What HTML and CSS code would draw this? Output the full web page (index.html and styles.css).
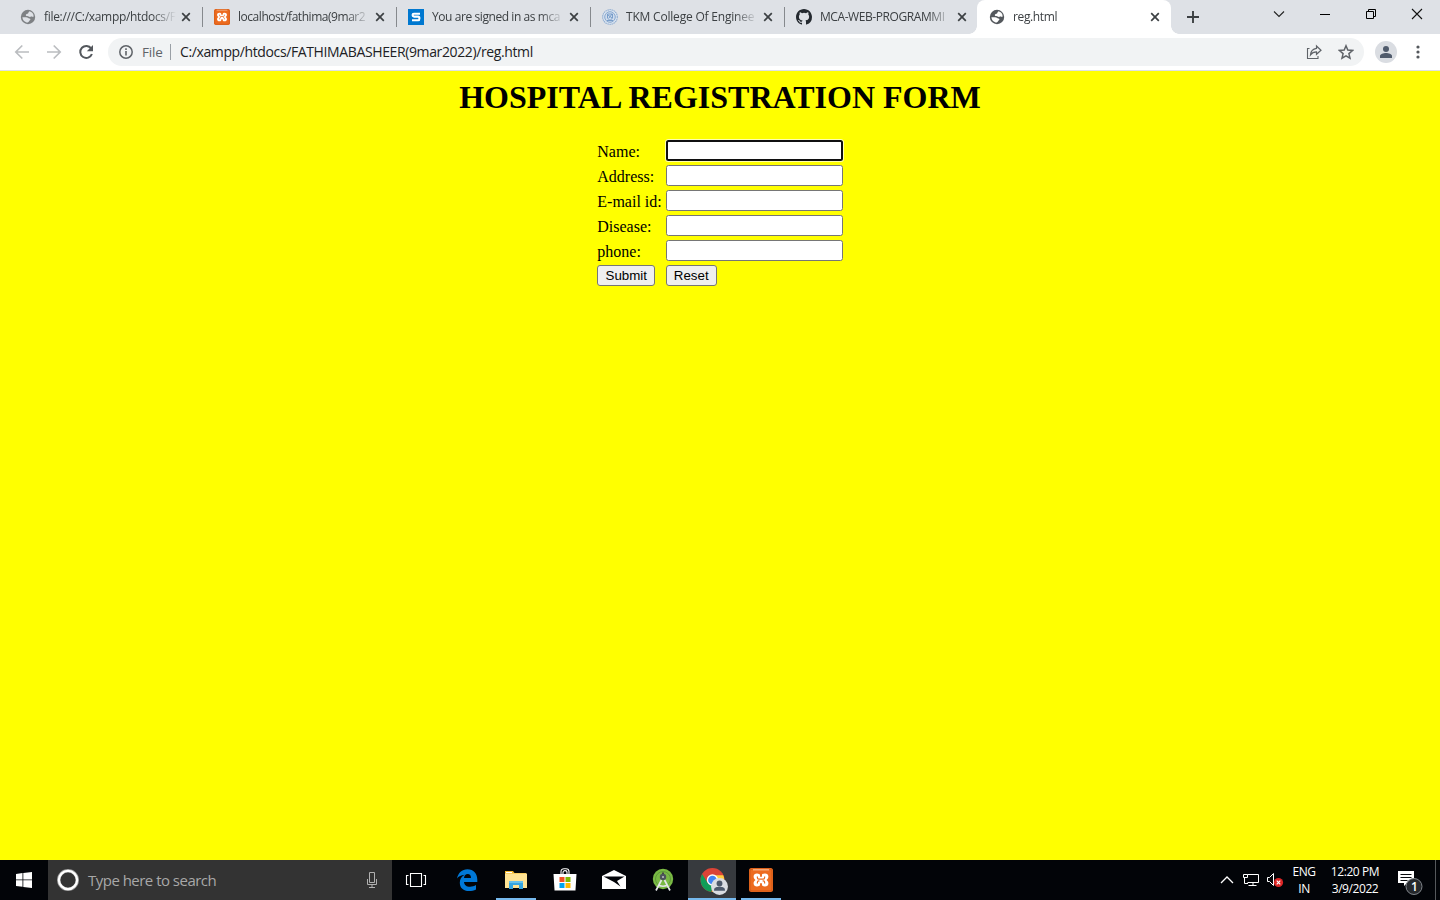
FILE: index.html
```html
<!DOCTYPE html>
<html lang="en">
<head>
<meta charset="utf-8">
<title>reg.html</title>
<link rel="stylesheet" href="styles.css">
</head>
<body>
<svg class="defs" width="0" height="0">
  <defs>
    <symbol id="globe" viewBox="0 0 16 16"><circle cx="8" cy="8" r="7.200" fill="currentColor"/><path d="M9.500 2.300C12 2.800 13.600 5 13.700 7.400c-.8.600-1.800.4-2.400-.2-.6.8-1.700.9-2.600.4-.8-.5-2.200-.1-2.700-.8-.6-1 .3-1.800 1.400-2 1.300-.2.700-1.600 2.100-2.500zM2.400 8.300h3.800c1.500 0 2 1.200 3.200 1.300 1.200.1 1.300 1.200.5 1.700-1 .6-.9 1.700-2.200 2.300C4.900 13.500 2.600 11.200 2.400 8.300z" fill="var(--cut)"/></symbol>
    <symbol id="x" viewBox="0 0 10 10"><path d="M1.200 1.200l7.600 7.600M8.800 1.200L1.200 8.800" stroke="#3c4043" stroke-width="1.700"/></symbol>
    <symbol id="xampp" viewBox="0 0 24 24"><rect width="24" height="24" rx="2.500" fill="#ed6b1f"/><rect x="1" y="1" width="22" height="22" rx="2" fill="none" stroke="#cf5a18"/><path d="M4 1.800h16" stroke="#f9b98c" stroke-width="1.200"/><path d="M12 9.800V8.200C11.600 6.300 9.700 5.500 8 5.500c-2 0-3.400 1.300-3.400 3.100 0 1.500.7 2.500 1.900 3.400-1.200.9-1.900 1.900-1.900 3.400 0 1.800 1.400 3.100 3.400 3.100 1.700 0 3.600-.8 4-2.700v-1.600 1.600c.4 1.900 2.300 2.700 4 2.700 2 0 3.400-1.300 3.400-3.100 0-1.500-.7-2.500-1.900-3.400 1.200-.9 1.900-1.900 1.900-3.400 0-1.800-1.400-3.100-3.400-3.100-1.700 0-3.600.8-4 2.700z" fill="#fff"/><path d="M12 4v4.800M12 15.200V20" stroke="#ed6b1f" stroke-width="1.900"/><path d="M8.400 8.500v1.300c0 .8.600 1.400 1.400 1.400h4.400c.8 0 1.400-.6 1.400-1.400V8.500M8.400 15.500v-1.300c0-.8.600-1.400 1.400-1.400h.6M15.600 15.500v-1.300c0-.8-.6-1.400-1.400-1.400h-.6" fill="none" stroke="#ed6b1f" stroke-width="1.200"/></symbol>
  </defs>
</svg>
<div class="screen">
  <header class="tabstrip">
    <div class="tab"><svg class="fav faded"><use href="#globe"/></svg><span class="title t1">file:///C:/xampp/htdocs/F</span><svg class="close"><use href="#x"/></svg></div>
    <div class="tab"><svg class="fav"><use href="#xampp"/></svg><span class="title t2">localhost/fathima(9mar2</span><svg class="close"><use href="#x"/></svg></div>
    <div class="tab"><svg class="fav" viewBox="0 0 16 16"><path fill="#0078d0" d="M0 0h16v16H0z"/><path d="M12 4.700H5.900Q4.600 4.700 4.600 6t1.300 1.600h4.200q1.300 0 1.300 1.800t-1.300 1.900H4" fill="none" stroke="#fff" stroke-width="2.100"/></svg><span class="title t3">You are signed in as mca</span><svg class="close"><use href="#x"/></svg></div>
    <div class="tab"><svg class="fav" viewBox="0 0 16 16"><circle cx="8" cy="8" r="7.300" fill="#e0e8f2" stroke="#92afd3" stroke-width="1.200" stroke-dasharray="1.500 .6"/><circle cx="8" cy="8" r="5.300" fill="#cfdced" stroke="#84a5ce"/><path d="M5.500 5h5v4L8 11.500 5.500 9zM6 6l4 3M10 5L7 9M5 11.500h6" fill="none" stroke="#6f96c6" stroke-width=".9"/></svg><span class="title t4">TKM College Of Enginee</span><svg class="close"><use href="#x"/></svg></div>
    <div class="tab last"><svg class="fav" viewBox="0 0 16 16"><path fill="#24292f" d="M8 0C3.580 0 0 3.580 0 8c0 3.540 2.290 6.530 5.470 7.590.4.070.55-.17.55-.38 0-.19-.01-.82-.01-1.490-2.010.37-2.530-.49-2.690-.94-.09-.23-.48-.94-.82-1.130-.28-.15-.68-.52-.01-.53.63-.01 1.080.58 1.230.82.72 1.210 1.870.87 2.330.66.07-.52.28-.87.51-1.070-1.780-.2-3.640-.89-3.640-3.950 0-.87.31-1.590.82-2.150-.08-.2-.36-1.020.08-2.120 0 0 .67-.21 2.200.82a7.600 7.600 0 014 0c1.530-1.040 2.200-.82 2.200-.82.44 1.100.16 1.920.08 2.120.51.56.82 1.270.82 2.150 0 3.070-1.870 3.750-3.650 3.950.29.25.54.73.54 1.480 0 1.070-.01 1.930-.01 2.200 0 .21.15.46.55.38A8 8 0 0016 8c0-4.420-3.580-8-8-8z"/></svg><span class="title t5">MCA-WEB-PROGRAMMI</span><svg class="close"><use href="#x"/></svg></div>
    <div class="tab active"><svg class="fav"><use href="#globe"/></svg><span class="title t6">reg.html</span><svg class="close"><use href="#x"/></svg></div>
    <svg class="newtab" viewBox="0 0 12 12"><path d="M6 0v12M0 6h12" stroke="#3c4043" stroke-width="1.900"/></svg>
    <div class="controls">
      <svg viewBox="0 0 12 12"><path d="M1 3.500l5 5 5-5" fill="none" stroke="#222" stroke-width="1.100"/></svg>
      <svg viewBox="0 0 12 12"><path d="M1 6.500h10" stroke="#000"/></svg>
      <svg viewBox="0 0 12 12"><path d="M1.500 3.500h7v7h-7zM3.500 3V1.500h7v7H9" fill="none" stroke="#000"/></svg>
      <svg viewBox="0 0 12 12"><path d="M1 1l10 10M11 1L1 11" stroke="#111" stroke-width="1.100"/></svg>
    </div>
  </header>
  <div class="toolbar">
    <svg class="nav" viewBox="0 0 16 16"><path d="M15 8H2M8.300 1.500L1.800 8l6.500 6.500" fill="none" stroke="#bbbdc0" stroke-width="1.700"/></svg>
    <svg class="nav" viewBox="0 0 16 16"><path d="M1 8h13M7.700 1.500L14.200 8l-6.500 6.500" fill="none" stroke="#bbbdc0" stroke-width="1.700"/></svg>
    <svg class="nav" viewBox="0 0 16 16"><path d="M13.200 4.500A6 6 0 1 0 13.900 10" fill="none" stroke="#54585d" stroke-width="2"/><path d="M15 1v6.200H8.800z" fill="#54585d"/></svg>
    <div class="omnibox">
      <svg class="info" viewBox="0 0 14 14"><circle cx="7" cy="7" r="6.200" fill="none" stroke="#5f6368" stroke-width="1.500"/><path d="M7 6v4.500M7 3.300v1.600" stroke="#5f6368" stroke-width="1.600"/></svg>
      <span class="scheme">File</span><span class="bar"></span><span class="url">C:/xampp/htdocs/FATHIMABASHEER(9mar2022)/reg.html</span>
      <svg class="share" viewBox="0 0 16 16"><path d="M3.500 4.500h-2v10h10.500v-2.500" fill="none" stroke="#5f6368" stroke-width="1.100"/><path d="M10.500 2L15 6.200l-4.500 4.100V7.900C8 7.900 6 8.700 4.500 10.800c.3-3.300 2.400-5.900 6-6.400z" fill="none" stroke="#5f6368" stroke-width="1.200"/></svg>
      <svg class="star" viewBox="0 0 16 16"><path d="M8 1.800l1.800 4.300 4.700.4-3.600 3.100 1.100 4.600L8 11.800l-4 2.400 1.100-4.600-3.600-3.100 4.700-.4z" fill="none" stroke="#5f6368" stroke-width="1.500"/></svg>
    </div>
    <svg class="avatar" viewBox="0 0 22 22"><circle cx="11" cy="11" r="11" fill="#dadde2"/><circle cx="11" cy="8" r="3" fill="#505b6c"/><path d="M5 17v-2c0-2 3.500-3 6-3s6 1 6 3v2z" fill="#505b6c"/></svg>
    <svg class="menu" viewBox="0 0 4 14"><g fill="#54585d"><circle cx="2" cy="2" r="1.600"/><circle cx="2" cy="7" r="1.600"/><circle cx="2" cy="12" r="1.600"/></g></svg>
  </div>
  <main class="page">
    <h1>HOSPITAL REGISTRATION FORM</h1>
    <form>
      <table>
        <tr><td>Name:</td><td><input class="focused" type="text"></td></tr>
        <tr><td>Address:</td><td><input type="text"></td></tr>
        <tr><td>E-mail id:</td><td><input type="text"></td></tr>
        <tr><td>Disease:</td><td><input type="text"></td></tr>
        <tr><td>phone:</td><td><input type="text"></td></tr>
        <tr><td class="action-cell"><button type="button" class="submit">Submit</button></td><td><button type="button" class="reset">Reset</button></td></tr>
      </table>
    </form>
  </main>
  <footer class="taskbar">
    <div class="start"><svg width="16" height="16" viewBox="0 0 16 16"><path fill="#fff" d="M0 2l6.500-.9v6.400H0zM7.300 1L16 0v7.500H7.300zM0 8.300h6.500v6.500L0 13.900zM7.300 8.300H16V16l-8.700-1.100z"/></svg></div>
    <div class="search">
      <svg width="22" height="22" viewBox="0 0 22 22"><circle cx="11" cy="11" r="9.300" fill="none" stroke="#999" stroke-width="3.400"/><circle cx="11" cy="11" r="9.100" fill="none" stroke="#fff" stroke-width="2.300"/></svg>
      <span>Type here to search</span>
      <svg class="mic" viewBox="0 0 12 18"><path d="M3.500 1.500h5v10h-5zM1.500 8v5.500h9V8M6 14v2.500M3 16.500h6" fill="none" stroke="#b0b0b0"/></svg>
    </div>
    <div class="apps">
      <div class="app"><svg viewBox="0 0 24 24"><path d="M6.500 5.500h11v13h-11zM4.500 7.500h-2v9h2M19.500 7.500h2v9h-2" fill="none" stroke="#fff" stroke-width="1.100"/></svg></div>
      <div class="app edge"><svg viewBox="0 0 24 24"><path fill="#0078d7" d="M2 10.600C3.200 4.700 7 1.200 12.400 1.200c6.300 0 9.900 4.300 9.900 10.300v2.400H9c.2 3.200 2.700 4.800 6 4.800 2.200 0 4.400-.7 6-1.700v4.500c-2 1.100-4.400 1.600-7 1.600-5.500 0-9.200-3.100-9.200-8.300 0-3.400 1.700-6.300 4.800-8C6 7.300 3.600 8.400 2 10.600zm7-.7h7c0-2.500-1.200-3.900-3.300-3.900C10.700 6 9.300 7.500 9 9.900z"/></svg></div>
      <div class="app open"><svg viewBox="0 0 24 24"><path fill="#f3b72a" d="M1 3h8l1.500 2H22v3H1z"/><path fill="#ffe394" d="M1 5.500h22V20H1z"/><path fill="#fff" d="M2 4h6v1H2z"/><path fill="#36a5df" d="M5 13h14v8h-4v-4H9v4H5z"/><path fill="#65c2ed" d="M5 13h14v2H5z"/></svg></div>
      <div class="app"><svg viewBox="0 0 24 24"><path d="M8 6V3.500C8 1.500 9.500.7 11 .7h2c1.500 0 3 1 3 2.800V6M10 6V4.500c0-2.500 4-2.500 4 0V6" fill="none" stroke="#fff" stroke-width="1.100"/><path fill="#fff" d="M.5 6h23l-1 16.500h-21z"/><path fill="#f25022" d="M6.500 9h5v5h-5z"/><path fill="#7fba00" d="M12.500 9h5v5h-5z"/><path fill="#00a4ef" d="M6.500 15h5v5h-5z"/><path fill="#ffb900" d="M12.500 15h5v5h-5z"/></svg></div>
      <div class="app"><svg viewBox="0 0 24 24"><path fill="#fff" d="M0 8l12-6 12 6v13H0z"/><path fill="#020408" d="M1.500 8.500h21L15 13l3.500 5.500L12 14z"/></svg></div>
      <div class="app"><svg viewBox="0 0 24 24"><circle cx="12" cy="11" r="10.200" fill="#79b944"/><circle cx="12" cy="11" r="7.500" fill="none" stroke="#5d983a"/><path d="M12 4.500v3" stroke="#444" stroke-width="2"/><circle cx="12" cy="9" r="3.200" fill="#4d555a"/><circle cx="12" cy="9" r="1" fill="#bfc5c7"/><path d="M10.500 12L5 22.500M13.500 12L19 22.500M7 17c3 1.500 7 1.500 10 0" fill="none" stroke="#e3e6e7" stroke-width="1.700"/></svg></div>
      <div class="app open current"><svg viewBox="0 0 24 24"><circle cx="11.500" cy="12" r="11" fill="#db4437"/><path fill="#109d58" d="M2 6.500l5 8 4.500 3-1 5.500A11 11 0 0 1 2 6.500z"/><path fill="#ffcd40" d="M11.500 7.500h10A11 11 0 0 1 11 23L16 14.500z"/><circle cx="11.500" cy="12" r="5.200" fill="#fff"/><circle cx="11.500" cy="12" r="4" fill="#4285f4"/><circle cx="18" cy="18" r="7.800" fill="#dadde2"/><circle cx="18" cy="15.200" r="2.700" fill="#4d596b"/><path d="M13 22v-1c0-2 2.500-2.700 5-2.700s5 .7 5 2.700v1z" fill="#4d596b"/></svg></div>
      <div class="app open"><svg viewBox="0 0 24 24"><use href="#xampp"/></svg></div>
    </div>
    <div class="tray">
      <svg class="chev" viewBox="0 0 14 8"><path d="M1 7l6-6 6 6" fill="none" stroke="#fff" stroke-width="1.300"/></svg>
      <svg class="net" viewBox="0 0 18 14"><path d="M5.500 1.500h11v8h-11M11 10v3M6.500 12.500h8M2.500 5v5.500H6M1.500 1.500h4v3h-4z" fill="none" stroke="#fff"/></svg>
      <svg class="vol" viewBox="0 0 18 16"><path d="M1.500 5.500h2l4-4v12l-4-4h-2z" fill="none" stroke="#fff"/><circle cx="12.500" cy="10.500" r="4.600" fill="#dc2626"/><path d="M10.700 8.700l3.600 3.600M14.300 8.700l-3.600 3.600" stroke="#fff" stroke-width="1.100"/></svg>
      <div class="lang"><span>ENG</span><span>IN</span></div>
      <div class="clock"><span>12:20 PM</span><span>3/9/2022</span></div>
      <div class="action"><svg width="25" height="26" viewBox="0 0 25 26"><path d="M0 1h16v12H9l-3 3v-3H0z" fill="#fff"/><path d="M2.500 4.500h11M2.500 7.500h11M2.500 10.500h7" stroke="#080a0d" stroke-width="1.200"/><circle cx="16" cy="16.500" r="8" fill="#25282c" stroke="#80858a"/></svg><b>1</b></div>
      <i></i>
    </div>
  </footer>
</div>
</body>
</html>
```

FILE: styles.css
```css
* { box-sizing: border-box; }
body { margin: 0; overflow: hidden; font-family: "Open Sans", "Noto Sans", sans-serif; }
svg { display: block; flex: none; }
.defs { position: absolute; }
.screen { width: 1440px; height: 900px; display: flex; flex-direction: column; }
.tabstrip { height: 34px; flex: none; background: #dee1e6; display: flex; padding-left: 8px; --cut: #dee1e6; }
.tab { width: 194px; padding: 0 10px 0 12px; display: flex; align-items: center; position: relative; color: #3c4043; font-size: 12px; }
.tab:not(.last):not(.active)::after { content: ""; position: absolute; right: -1px; top: 7px; width: 1px; height: 20px; background: #86898d; }
.fav { width: 16px; height: 16px; margin-right: 8px; color: #54585d; }
.faded { color: #7e8184; }
.title { width: 132px; white-space: nowrap; overflow: hidden; line-height: 18px; -webkit-mask-image: linear-gradient(90deg, #000 108px, transparent 132px); mask-image: linear-gradient(90deg, #000 108px, transparent 132px); }
.t1 { letter-spacing: -.32px; }
.t2 { letter-spacing: -.46px; }
.t3 { letter-spacing: -.42px; }
.t4 { letter-spacing: -.2px; }
.t5 { letter-spacing: -.42px; }
.t6 { letter-spacing: -.38px; }
.close { width: 10px; height: 10px; margin-left: 5px; }
.active { background: #fff; border-radius: 8px 8px 0 0; margin-left: -1px; --cut: #fff; }
.active::before, .active::after { content: ""; position: absolute; bottom: 0; width: 8px; height: 8px; background: radial-gradient(circle at 0 0, transparent 7.5px, #fff 8px); }
.active::before { left: -8px; }
.active::after { right: -8px; background: radial-gradient(circle at 100% 0, transparent 7.5px, #fff 8px); }
.newtab { width: 12px; height: 12px; margin: 11px 0 0 16px; }
.controls { margin: 8px 17px 0 auto; display: flex; gap: 34px; }
.controls svg { width: 12px; height: 12px; }
.toolbar { height: 37px; flex: none; display: flex; align-items: center; padding: 0 20px 1px 14px; background: #fff; border-bottom: 1px solid #dee1e6; }
.nav { width: 16px; height: 16px; margin-right: 16px; }
.omnibox { width: 1256px; height: 28px; margin-left: -2px; border-radius: 14px; background: #f1f3f4; display: flex; align-items: center; padding: 0 10px 0 11px; font-size: 14px; color: #202124; white-space: nowrap; }
.info { width: 14px; height: 14px; margin-right: 9px; }
.scheme { width: 28px; color: #5f6368; font-size: 13.5px; letter-spacing: -.2px; }
.bar { width: 1px; height: 16px; background: #9aa0a6; margin-right: 9px; }
.url { letter-spacing: -.38px; }
.share { width: 16px; height: 16px; margin-left: auto; }
.star { width: 16px; height: 16px; margin-left: 16px; }
.avatar { width: 22px; height: 22px; margin-left: 11px; }
.menu { width: 4px; height: 14px; margin-left: auto; }
.page { height: 789px; padding: 8px; background: #ff0; font-family: "Liberation Serif", serif; font-size: 16px; color: #000; }
h1 { margin: 0 0 21px; font-size: 32px; line-height: 37px; text-align: center; }
table { margin: 0 auto; border-spacing: 2px; line-height: 18px; }
td { padding: 1px; }
td:first-child:not(.action-cell) { padding: 3px 1px 1px; }
tr { height: 23px; }
input { display: block; width: 177px; height: 21px; padding: 1px 2px; border: 1px solid #767676; border-radius: 2.5px; background: #fff; outline: none; }
.focused { border: 2px solid #101010; box-shadow: 0 0 0 1px #ffffffb0; }
button { display: block; height: 21px; padding: 0; border: 1px solid #767676; border-radius: 3px; background: #efefef; color: #000; font: 13.333px "Liberation Sans", sans-serif; }
.submit { width: 58px; }
.reset { width: 51px; }
.taskbar { height: 40px; flex: none; display: flex; background: #020408; color: #fff; }
.start { width: 48px; display: grid; place-items: center; }
.search { width: 344px; background: #333; display: flex; align-items: center; padding: 0 14px 0 9px; color: #a8a8a8; font-size: 15px; }
.search span { margin-left: 9px; letter-spacing: -.52px; }
.mic { width: 12px; height: 18px; margin-left: auto; }
.apps { display: flex; }
.app { width: 48px; display: grid; place-items: center; position: relative; margin-right: 1px; }
.app svg { width: 24px; height: 24px; }
.app.edge { margin-left: 2px; }
.app.open::after { content: ""; position: absolute; left: 4px; right: 4px; bottom: 0; height: 2px; background: #76b9ed; }
.app.current { background: #373a3e; }
.app.current svg { width: 26px; height: 26px; margin-left: 2px; overflow: visible; }
.app.current::after { left: 0; right: 0; }
.tray { margin-left: auto; display: flex; align-items: center; font-size: 12px; }
.chev { width: 14px; height: 8px; }
.net { width: 18px; height: 14px; margin-left: 8px; }
.vol { width: 18px; height: 16px; margin-left: 6px; }
.lang, .clock { display: flex; flex-direction: column; align-items: center; line-height: 17.500px; white-space: nowrap; }
.lang { width: 28px; margin-left: 6px; letter-spacing: -.45px; }
.clock { width: 54px; margin-left: 10px; letter-spacing: -.42px; }
.action { margin: 5px 0 0 16px; position: relative; }
.action b { position: absolute; left: 13px; top: 8px; font-size: 12px; line-height: 17px; font-weight: 600; }
.tray i { width: 1px; height: 40px; background: #55585b; margin: 0 4px 0 12px; }
```
